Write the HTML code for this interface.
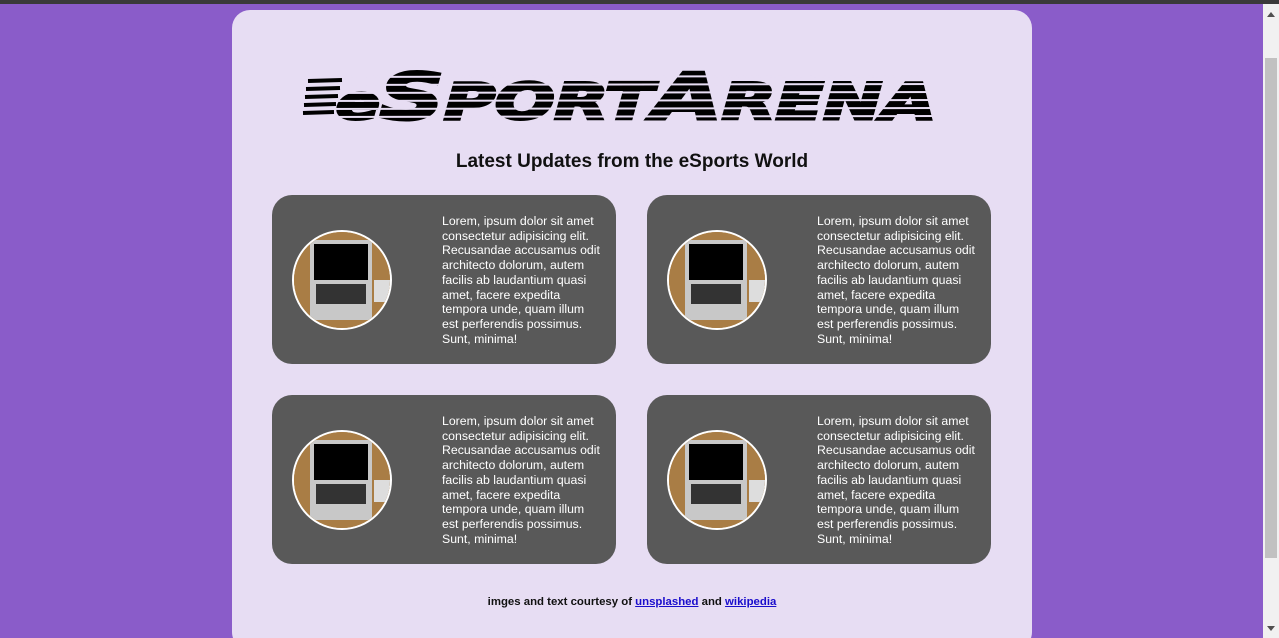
<!DOCTYPE html>
<html><head><style>
*{margin:0;padding:0;box-sizing:border-box}
html,body{width:1279px;height:638px;overflow:hidden}
body{background:#8a5cc9;font-family:"Liberation Sans",Roboto,sans-serif;position:relative}
.top{position:absolute;left:0;top:0;width:1279px;height:4px;background:#3a3a3a}
.sb{position:absolute;left:1263px;top:4px;width:16px;height:634px;background:#f1f1f1}
.sb .th{position:absolute;left:2px;top:54px;width:12px;height:500px;background:#c1c1c1}
.sb .up{position:absolute;left:4px;top:8px;width:0;height:0;border-left:4px solid transparent;border-right:4px solid transparent;border-bottom:5px solid #505050}
.sb .dn{position:absolute;left:4px;top:622px;width:0;height:0;border-left:4px solid transparent;border-right:4px solid transparent;border-top:5px solid #505050}
.wrap{position:absolute;left:232px;top:10px;width:800px;height:640px;background:#e7ddf3;border-radius:18px}
h1{position:absolute;top:141px;left:0;width:100%;text-align:center;font-size:19px;font-weight:bold;color:#111}
.card{position:absolute;width:344px;height:169px;background:#595959;border-radius:20px}
.circ{position:absolute;left:20px;top:35px;width:100px;height:100px;border-radius:50%;border:2px solid #fff;overflow:hidden;background:#a97d45}
.card p{position:absolute;left:170px;top:19px;width:170px;white-space:nowrap;color:#fff;font-size:12.3px;line-height:14.7px}
.foot{position:absolute;top:586px;width:100%;text-align:center;font-size:11.4px;font-weight:bold;color:#111}
.foot a{color:#1a0dcc;text-decoration:underline}
</style></head><body>
<div class="top"></div>
<div class="wrap">
<svg style="position:absolute;left:70px;top:55px" width="640" height="60" viewBox="0 0 640 60">
<text x="34" y="54" font-family="DejaVu Sans" font-weight="bold" font-style="italic" textLength="600" lengthAdjust="spacingAndGlyphs" fill="#000" stroke="#000" stroke-width="3"><tspan font-size="46">e</tspan><tspan font-size="64">S</tspan><tspan font-size="50">PORT</tspan><tspan font-size="64">A</tspan><tspan font-size="50">RENA</tspan></text>
<g stroke="#e7ddf3" stroke-width="2">
<line x1="0" y1="12" x2="640" y2="11"/><line x1="0" y1="20" x2="640" y2="19"/><line x1="0" y1="28" x2="640" y2="27"/><line x1="0" y1="36" x2="640" y2="35"/><line x1="0" y1="44" x2="640" y2="43"/><line x1="0" y1="52" x2="640" y2="51"/>
</g>
<g stroke="#000" stroke-width="4">
<line x1="6" y1="16" x2="40" y2="15"/><line x1="4" y1="24" x2="38" y2="23"/><line x1="3" y1="32" x2="36" y2="31"/><line x1="2" y1="40" x2="34" y2="39"/><line x1="1" y1="48" x2="32" y2="47"/>
</g>
</svg>
<h1>Latest Updates from the eSports World</h1>
<div class="card" style="left:40px;top:185px"><div class="circ"><svg width="96" height="96" viewBox="0 0 96 96"><rect width="96" height="96" fill="#a97d45"/><rect x="16" y="8" width="62" height="80" fill="#c8c8c8"/><rect x="20" y="12" width="54" height="36" fill="#000"/><rect x="22" y="52" width="50" height="20" fill="#333"/><rect x="80" y="48" width="16" height="22" fill="#ddd"/></svg></div><p>Lorem, ipsum dolor sit amet<br>consectetur adipisicing elit.<br>Recusandae accusamus odit<br>architecto dolorum, autem<br>facilis ab laudantium quasi<br>amet, facere expedita<br>tempora unde, quam illum<br>est perferendis possimus.<br>Sunt, minima!</p></div>
<div class="card" style="left:415px;top:185px"><div class="circ"><svg width="96" height="96" viewBox="0 0 96 96"><rect width="96" height="96" fill="#a97d45"/><rect x="16" y="8" width="62" height="80" fill="#c8c8c8"/><rect x="20" y="12" width="54" height="36" fill="#000"/><rect x="22" y="52" width="50" height="20" fill="#333"/><rect x="80" y="48" width="16" height="22" fill="#ddd"/></svg></div><p>Lorem, ipsum dolor sit amet<br>consectetur adipisicing elit.<br>Recusandae accusamus odit<br>architecto dolorum, autem<br>facilis ab laudantium quasi<br>amet, facere expedita<br>tempora unde, quam illum<br>est perferendis possimus.<br>Sunt, minima!</p></div>
<div class="card" style="left:40px;top:385px"><div class="circ"><svg width="96" height="96" viewBox="0 0 96 96"><rect width="96" height="96" fill="#a97d45"/><rect x="16" y="8" width="62" height="80" fill="#c8c8c8"/><rect x="20" y="12" width="54" height="36" fill="#000"/><rect x="22" y="52" width="50" height="20" fill="#333"/><rect x="80" y="48" width="16" height="22" fill="#ddd"/></svg></div><p>Lorem, ipsum dolor sit amet<br>consectetur adipisicing elit.<br>Recusandae accusamus odit<br>architecto dolorum, autem<br>facilis ab laudantium quasi<br>amet, facere expedita<br>tempora unde, quam illum<br>est perferendis possimus.<br>Sunt, minima!</p></div>
<div class="card" style="left:415px;top:385px"><div class="circ"><svg width="96" height="96" viewBox="0 0 96 96"><rect width="96" height="96" fill="#a97d45"/><rect x="16" y="8" width="62" height="80" fill="#c8c8c8"/><rect x="20" y="12" width="54" height="36" fill="#000"/><rect x="22" y="52" width="50" height="20" fill="#333"/><rect x="80" y="48" width="16" height="22" fill="#ddd"/></svg></div><p>Lorem, ipsum dolor sit amet<br>consectetur adipisicing elit.<br>Recusandae accusamus odit<br>architecto dolorum, autem<br>facilis ab laudantium quasi<br>amet, facere expedita<br>tempora unde, quam illum<br>est perferendis possimus.<br>Sunt, minima!</p></div>
<div class="foot">imges and text courtesy of <a>unsplashed</a> and <a>wikipedia</a></div>
</div>
<div class="sb"><div class="up"></div><div class="th"></div><div class="dn"></div></div>
</body></html>
